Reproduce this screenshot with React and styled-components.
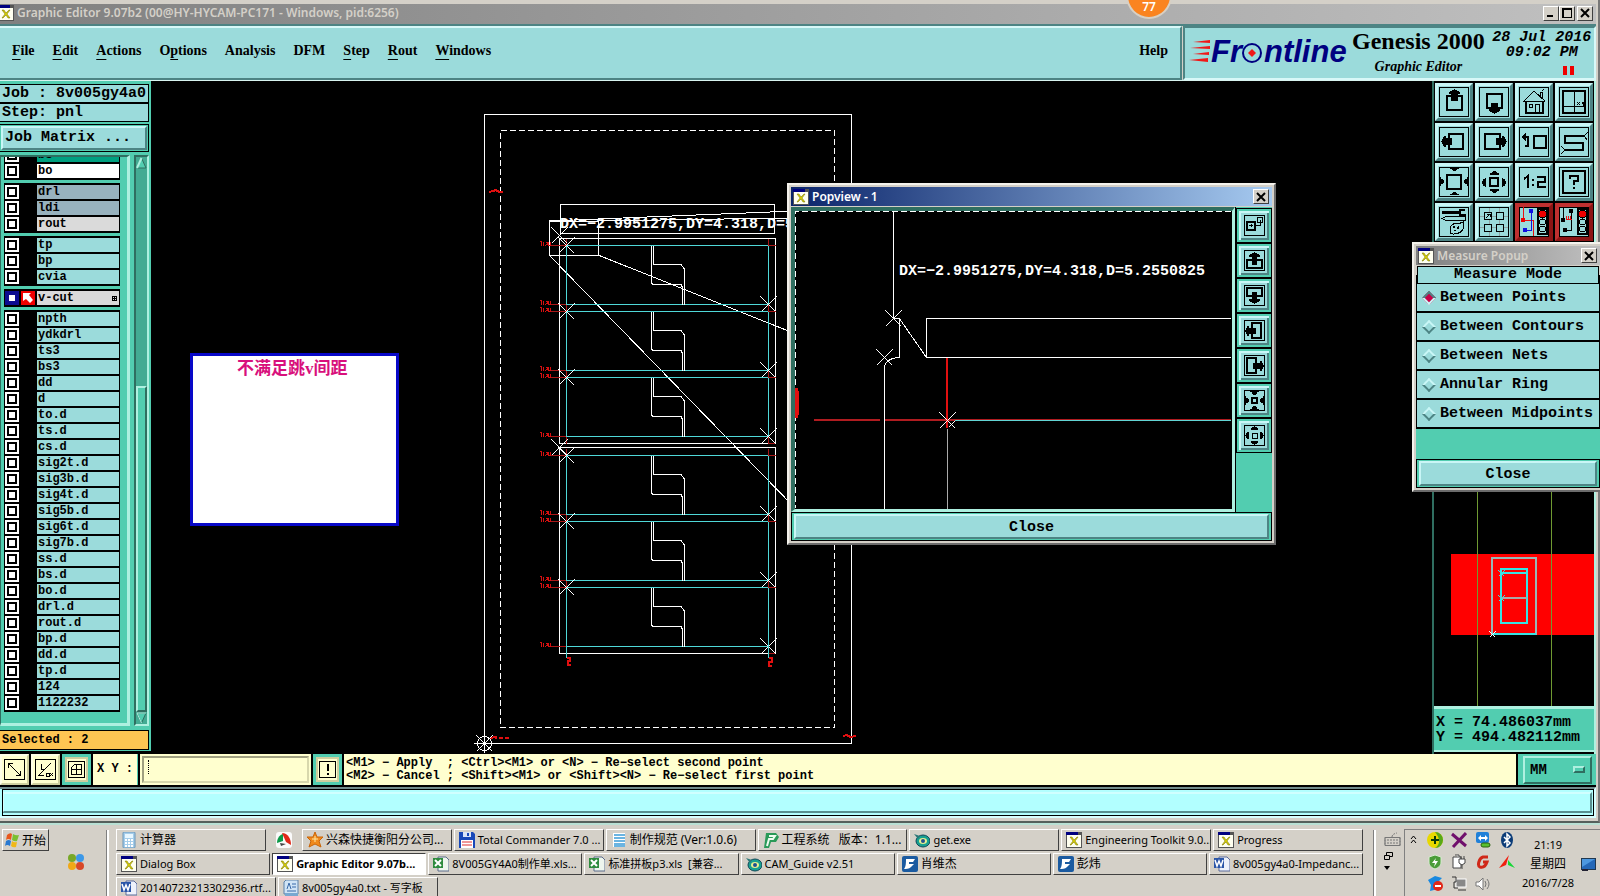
import React from "react";
import styled, { createGlobalStyle, css } from "styled-components";

const cyan = "#9bdbdb";
const cyanLight = "#c9f6f6";
const cyanDark = "#4d8484";
const green = "#52cdb0";
const greenLight = "#aef0e0";
const greenDark = "#2f6e60";
const greenMid = "#43ab93";
const cream = "#ffffcf";
const face = "#d4d0c8";

const mono = '"Liberation Mono", monospace';
const serif = '"Liberation Serif", serif';
const ui = '"Noto Sans", "Noto Sans CJK SC", sans-serif';

const raised = (width, light, dark) => css`
  border: ${width}px solid;
  border-color: ${light} ${dark} ${dark} ${light};
`;

const GlobalStyle = createGlobalStyle`
  * { box-sizing: border-box; }
  body {
    margin: 0;
    overflow: hidden;
    background: #000;
    color: #000;
    font-family: ${ui};
    font-size: 12px;
  }
  button, input, select {
    margin: 0;
    padding: 0;
    border-radius: 0;
    color: inherit;
    font: inherit;
  }
  svg { display: block; flex: none; }
`;

const tools = [
  { name: "Pan up", icon: "up" },
  { name: "Pan down", icon: "down" },
  { name: "Home", icon: "home" },
  { name: "Position", icon: "xy" },
  { name: "Pan left", icon: "left" },
  { name: "Pan right", icon: "right" },
  { name: "Previous view", icon: "prev" },
  { name: "Serpentine", icon: "snake" },
  { name: "Zoom in", icon: "zoomIn" },
  { name: "Zoom out", icon: "zoomOut" },
  { name: "Scale", icon: "scale" },
  { name: "Help", icon: "help" },
  { name: "Setup", icon: "setup" },
  { name: "Panelize", icon: "grid" },
  { name: "Net lights", icon: "netColor", alert: true },
  { name: "Short lights", icon: "netDark", alert: true },
];

const toolIcons = {
  up: (
    <>
      <rect x="8" y="9" width="15" height="14" fill="none" stroke="#000" strokeWidth="2" />
      <path d="M15 2h1v1h2v1h2v1h1v2h-2v7h-7V7h-2V5h1V4h2V3h2z" />
    </>
  ),
  down: (
    <>
      <rect x="8" y="7" width="15" height="14" fill="none" stroke="#000" strokeWidth="2" />
      <path d="M12 16h7v6h2v2h-1v1h-2v1h-2v1h-1v-1h-2v-1h-2v-1h-1v-2h2z" />
    </>
  ),
  left: (
    <>
      <rect x="10" y="7" width="14" height="15" fill="none" stroke="#000" strokeWidth="2" />
      <path d="M2 14h1v-2h1v-2h1V9h2v2h6v7H7v2H5v-1H4v-2H3v-2H2z" />
    </>
  ),
  right: (
    <>
      <rect x="6" y="7" width="15" height="15" fill="none" stroke="#000" strokeWidth="2" />
      <path d="M28 14h-1v-2h-1v-2h-1V9h-2v2h-6v7h6v2h2v-1h1v-2h1v-2h1z" />
    </>
  ),
  home: (
    <>
      <path d="M7 14v12h17V14" fill="none" stroke="#000" strokeWidth="2" />
      <path d="M4 14h22M5 14L15 4l11 10M21 9V5h2v6M23 4l2-2" fill="none" stroke="#000" />
      <path d="M10.500 17.500h3v3h-3zM16.500 26v-8.500h4V26" fill="none" stroke="#000" />
    </>
  ),
  xy: (
    <>
      <rect x="4" y="4" width="22" height="22" fill="none" stroke="#000" strokeWidth="2" />
      <path d="M15.500 4v22M4 19.500h22" fill="none" stroke="#000" />
      <path d="M18 15l3 3M21 15l-3 3M23 15l1 2 1-2M24 17v2" fill="none" stroke="#000" />
    </>
  ),
  prev: (
    <>
      <rect x="15" y="9" width="12" height="12" fill="none" stroke="#000" strokeWidth="2" />
      <path d="M5 10h4v9H6" fill="none" stroke="#000" strokeWidth="2" />
      <path d="M2 10l5-4v8z" />
    </>
  ),
  snake: (
    <>
      <path d="M26 9H6v7h18v7H5" fill="none" stroke="#000" strokeWidth="2" />
      <path d="M26 8l3-3M26 10l2 3M5 22l-3-3M5 24l-3 3" fill="none" stroke="#000" />
    </>
  ),
  zoomIn: (
    <>
      <rect x="8" y="8" width="14" height="14" fill="none" stroke="#000" strokeWidth="2" />
      <path d="M11 1h9v1h-2v1h-1v1h-3V3h-1V2h-2zM11 28h9v-1h-2v-1h-1v-1h-3v1h-1v1h-2zM1 10h1v2h2v1h1v3H4v1H2v2H1zM29 10h-1v2h-2v1h-1v3h1v1h2v2h1z" />
    </>
  ),
  zoomOut: (
    <>
      <rect x="11" y="11" width="8" height="8" fill="none" stroke="#000" strokeWidth="2" />
      <path d="M14 4h3v1h1v1h2v2h-9V6h2V5h1zM14 26h3v-1h1v-1h2v-2h-9v2h2v1h1zM3 14h1v-2h2v-1h1v9H6v-1H4v-2H3zM27 14h-1v-2h-2v-1h-1v9h1v-1h2v-2h1z" />
    </>
  ),
  scale: (
    <path
      d="M5 12l4-3v12M13 13h2M13 18h2M18 10h8v5h-7v5h8"
      fill="none"
      stroke="#000"
      strokeWidth="2"
    />
  ),
  help: (
    <>
      <rect x="4" y="4" width="22" height="22" fill="none" stroke="#000" strokeWidth="2" />
      <path d="M11 12V9h8v5h-4v4M15 20v2" fill="none" stroke="#000" strokeWidth="2" />
    </>
  ),
  setup: (
    <>
      <path d="M3 4h17v3H3zM20 2h6v2h-4v3h5v2h-7z" />
      <path d="M3 11.500l4-2h19v4H7zM11 22c0-5 5-6 8-5l5-2v7c-2 5-11 6-13 4z" fill="none" stroke="#000" />
      <path d="M14 19h2v2h-2zM19 19h1v3h-2zM15 23h2v1h-2z" />
    </>
  ),
  grid: (
    <>
      <path d="M1 9h28M1 20h28M10 1v28M20 1v28" stroke="#8da5a5" />
      <path
        d="M5.500 5.500h7v7h-7zM17.500 5.500h7v7h-7zM5.500 17.500h7v7h-7zM17.500 17.500h7v7h-7z"
        fill={cyan}
        stroke="#000"
      />
      <path d="M7 11l4-4M8 7h3v3" fill="none" stroke="#000" />
    </>
  ),
  netColor: (
    <>
      <path d="M4.500 0v13h10v16" fill="none" stroke="#e81010" />
      <path d="M12.500 4v19H7" fill="none" stroke="#1010e0" />
      <circle cx="12" cy="4" r="2.500" fill="#1010e0" />
      <circle cx="4" cy="13" r="2.500" fill="#f00000" />
      <circle cx="6" cy="23" r="2.500" fill="#1010e0" />
      <TrafficLight />
    </>
  ),
  netDark: (
    <>
      <path d="M4.500 0v13M12.500 4v19H7" fill="none" stroke="#000" />
      <path d="M7.500 9v3M9.500 9v3M11.500 9v3M7 12.500h6" fill="none" stroke="#e81010" />
      <circle cx="12" cy="4" r="2.500" />
      <circle cx="4" cy="13" r="2.500" />
      <circle cx="6" cy="23" r="2.500" />
      <TrafficLight />
    </>
  ),
};

const popTools = [
  { name: "Move view", icon: "move" },
  { name: "Pan up", icon: "up" },
  { name: "Pan down", icon: "down" },
  { name: "Pan left", icon: "left" },
  { name: "Pan right", icon: "right" },
  { name: "Zoom in", icon: "zoomIn" },
  { name: "Zoom out", icon: "zoomOut" },
];

const popIcons = {
  move: (
    <>
      <rect x="3" y="7" width="8" height="8" fill="none" stroke="#000" strokeWidth="2" />
      <path d="M13.500 2.500h5v5h-5zM11 10.500h5V5M5 10.500h4M7 9v3" fill="none" stroke="#000" />
    </>
  ),
  up: (
    <>
      <rect x="3" y="10" width="15" height="8" fill="none" stroke="#000" strokeWidth="2" />
      <path d="M10 2h1v1h2v1h2v1h1v2h-3v8H8V7H5V5h1V4h2V3h2z" />
    </>
  ),
  down: (
    <>
      <rect x="3" y="3" width="15" height="8" fill="none" stroke="#000" strokeWidth="2" />
      <path d="M10 19h1v-1h2v-1h2v-1h1v-2h-3V7H8v7H5v2h1v1h2v1h2z" />
    </>
  ),
  left: (
    <>
      <rect x="8" y="3" width="9" height="15" fill="none" stroke="#000" strokeWidth="2" />
      <path d="M1 10h1V8h1V6h2v2h7v6H5v2H3v-2H2v-2H1z" />
    </>
  ),
  right: (
    <>
      <rect x="3" y="3" width="9" height="15" fill="none" stroke="#000" strokeWidth="2" />
      <path d="M20 10h-1V8h-1V6h-2v2H9v6h7v2h2v-2h1v-2h1z" />
    </>
  ),
  zoomIn: (
    <>
      <rect x="8" y="8" width="5" height="5" fill="none" stroke="#000" strokeWidth="2" />
      <path d="M6 1h9v1h-2v2h-1v1H9V4H8V2H6zM6 20h9v-1h-2v-2h-1v-1H9v1H8v2H6zM1 6h1v2h2v1h1v3H4v1H2v2H1zM20 6h-1v2h-2v1h-1v3h1v1h2v2h1z" />
    </>
  ),
  zoomOut: (
    <>
      <rect x="8" y="8" width="5" height="5" fill="none" stroke="#000" />
      <path d="M10 1h1v1h2v1h1v2H7V3h1V2h2zM10 20h1v-1h2v-1h1v-2H7v2h1v1h2zM1 10h1V8h1V7h2v7H3v-1H2v-2H1zM20 10h-1V8h-1V7h-2v7h2v-1h1v-2h1z" />
    </>
  ),
};

const layerGroups = [
  [{ name: "bs", color: "#00a080" }, { name: "bo", color: "#ffffff" }],
  [
    { name: "drl", color: "#98b2be" },
    { name: "ldi", color: "#98b2be" },
    { name: "rout", color: "#dadada" },
  ],
  [{ name: "tp" }, { name: "bp" }, { name: "cvia" }],
  [{ name: "v-cut", color: "#dadada", active: true }],
  [
    "npth", "ydkdrl", "ts3", "bs3", "dd", "d", "to.d", "ts.d", "cs.d",
    "sig2t.d", "sig3b.d", "sig4t.d", "sig5b.d", "sig6t.d", "sig7b.d",
    "ss.d", "bs.d", "bo.d", "drl.d", "rout.d", "bp.d", "dd.d", "tp.d",
    "124", "1122232",
  ].map((name) => ({ name })),
];

const menus = [
  ["", "F", "ile"],
  ["", "E", "dit"],
  ["", "A", "ctions"],
  ["O", "p", "tions"],
  ["Analysis", "", ""],
  ["DFM", "", ""],
  ["", "S", "tep"],
  ["", "R", "out"],
  ["", "W", "indows"],
];

const measureModes = [
  "Between Points",
  "Between Contours",
  "Between Nets",
  "Annular Ring",
  "Between Midpoints",
];

const taskRows = [
  [
    { icon: "calc", text: "计算器", large: true },
    { loose: true, icon: "pinwheel" },
    { icon: "star", text: "兴森快捷衡阳分公司...", large: true },
    { icon: "disk", text: "Total Commander 7.0 ..." },
    { icon: "note", text: "制作规范 (Ver:1.0.6)", large: true },
    { icon: "p", text: "工程系统   版本：1.1...", large: true },
    { icon: "eye", text: "get.exe" },
    { icon: "x", text: "Engineering Toolkit 9.0..." },
    { icon: "x", text: "Progress" },
  ],
  [
    { icon: "x", text: "Dialog Box" },
    { icon: "x", text: "Graphic Editor 9.07b...", active: true },
    { icon: "excel", text: "8V005GY4A0制作单.xls..." },
    { icon: "excel", text: "标准拼板p3.xls  [兼容..." },
    { icon: "eye", text: "CAM_Guide v2.51" },
    { icon: "f", text: "肖维杰", large: true },
    { icon: "f", text: "彭炜", large: true },
    { icon: "word", text: "8v005gy4a0-Impedanc..." },
  ],
  [
    { icon: "word", text: "20140723213302936.rtf...", fixed: true },
    { icon: "pad", text: "8v005gy4a0.txt - 写字板", fixed: true },
  ],
];

function TrafficLight() {
  return (
    <>
      <rect x="19" y="2" width="9" height="25" fill={cyan} stroke="#000" strokeWidth="2" />
      <circle cx="23.500" cy="7" r="4" fill="#f00000" stroke="#000" />
      <circle cx="23.500" cy="15" r="3" fill="none" stroke="#000" />
      <circle cx="23.500" cy="22" r="3" fill="none" stroke="#000" />
    </>
  );
}

function XIcon() {
  return (
    <svg width="16" height="16" viewBox="0 0 16 16" aria-hidden="true">
      <rect width="16" height="16" fill="#555" />
      <rect x="0" y="0" width="12" height="3" fill="#000080" />
      <rect x="1" y="3" width="14" height="12" fill="#fffff0" />
      <path d="M4 5h2l2 3 3-3h1L9 9l3 4h-2l-2-3-3 3H4l3-4z" fill="#d8d000" stroke="#6f6b00" strokeWidth="0.500" />
    </svg>
  );
}

const taskIcons = {
  calc: (
    <>
      <rect x="2" y="0" width="12" height="16" rx="1" fill="#a5cdea" stroke="#6b96b8" />
      <rect x="4" y="2" width="8" height="4" fill="#e8f7ff" />
      <path d="M4 8h8M4 11h8M4 14h8" stroke="#fff" strokeWidth="2" strokeDasharray="2 1" />
    </>
  ),
  pinwheel: (
    <>
      <rect width="16" height="16" rx="3" fill="#fafafa" />
      <path d="M7 2c-4 1-6 5-6 9l6-2z" fill="#0c9a48" />
      <path d="M6 1c6 0 9 6 9 12l-5-3z" fill="#e02818" />
      <path d="M4 11l6 1-5 2z" fill="#444" />
    </>
  ),
  star: (
    <>
      <path d="M8 0l2 5 6 0-4 4 2 6-6-3-6 3 2-6-4-4h6z" fill="#f08a1c" stroke="#c96508" />
      <path d="M8 4v6M5 7h6" stroke="#ffe7a0" />
    </>
  ),
  disk: (
    <>
      <path d="M0 0h14l2 2v14H0z" fill="#1848b8" />
      <rect x="4" y="0" width="8" height="5" fill="#d8e4f8" />
      <rect x="8" y="1" width="2" height="3" fill="#1848b8" />
      <rect x="2" y="8" width="12" height="8" fill="#fff" />
      <path d="M3 10h10M3 13h10" stroke="#e03030" />
    </>
  ),
  note: (
    <>
      <rect x="2" y="1" width="12" height="14" fill="#fff" />
      <path d="M3 3h11M3 6h11M3 9h11M3 12h11M3 14h11" stroke="#3a9cd8" strokeWidth="1.500" />
    </>
  ),
  p: (
    <>
      <path d="M3 1h10l3 4-3 5H8l-2 6H1z" fill="#2a9a58" />
      <path d="M6 4h6l-2 3H6l-2 7" fill="none" stroke="#eefcf0" strokeWidth="2" />
    </>
  ),
  eye: (
    <>
      <ellipse cx="9" cy="9" rx="7" ry="6" fill="#18a090" stroke="#104858" />
      <ellipse cx="9" cy="9" rx="4" ry="3" fill="#e8f090" />
      <circle cx="9" cy="9" r="2" fill="#205090" />
      <path d="M0 2l6 2-2 3z" fill="#2a7878" />
    </>
  ),
  excel: (
    <>
      <path d="M5 1h8l3 3v11H5z" fill="#eef6ee" stroke="#5b6a8a" />
      <rect x="0" y="2" width="10" height="10" fill="#2e8b3e" />
      <path d="M2 4l6 6M8 4l-6 6" stroke="#fff" strokeWidth="2" />
    </>
  ),
  word: (
    <>
      <path d="M5 1h8l3 3v11H5z" fill="#eef2fb" stroke="#5b6a9a" />
      <rect x="0" y="2" width="10" height="10" fill="#2b56a8" />
      <path d="M1 4l2 6 2-5 2 5 2-6" fill="none" stroke="#fff" strokeWidth="1.500" />
    </>
  ),
  f: (
    <>
      <rect width="16" height="16" rx="2" fill="#1a5aa0" />
      <path d="M4 3h9l-2 3H7v2h5l-3 3c-2 2-5 2-7 2 2-2 2-7 2-10z" fill="#fff" />
    </>
  ),
  pad: (
    <>
      <path d="M3 0h12v14H1V2z" fill="#cfe4f6" stroke="#5a80a8" />
      <path d="M4 9l2-6 2 6M9 4h4M9 7h4M4 11h9" fill="none" stroke="#3668a8" />
      <rect x="2" y="13" width="13" height="3" fill="#78a8d0" />
    </>
  ),
};

function TaskIcon({ name }) {
  if (name === "x") return <XIcon />;
  return (
    <svg width="16" height="16" viewBox="0 0 16 16" aria-hidden="true">
      {taskIcons[name]}
    </svg>
  );
}

const cells = [245.5, 311.5, 377.5, 455.5, 521.5, 587.5];

const cross = (x, y, r = 8) =>
  `M${x - r} ${y - r}l${r * 2} ${r * 2}M${x + r} ${y - r}l${-r * 2} ${r * 2}`;

// dimension labels are too small to read at this zoom, so they are only hinted
const label = (x, y) =>
  `M${x} ${y - 2}h2v4M${x + 3.5} ${y - 2}v4M${x + 5} ${y + 2}h1M${x + 6} ${y - 1}h2v2h-2M${x + 9} ${y - 2}v4h2v-4`;

function BoardDrawing() {
  return (
    <svg width="1281" height="673" viewBox="151 81 1281 673" fill="none" shapeRendering="crispEdges" aria-label="Panel drawing">
      <g stroke="#fff">
        <rect x="484.500" y="114.500" width="367" height="629" />
        <rect x="500.500" y="130.500" width="334" height="597" strokeDasharray="6 3" />
        <rect x="560.500" y="204.500" width="214" height="29" />
        <rect x="559.500" y="238.500" width="216" height="205" />
        <rect x="559.500" y="447.500" width="216" height="206" />
        <rect x="549.500" y="221.500" width="49" height="34" />
        <path d="M549 221L795 211M598 221L1232 211M549 255L795 508M598 255L1232 508" />
      </g>
      {cells.map((y) => (
        <g key={y}>
          <path d={`M566 ${y}H769M566 ${y + 59}H769M566.500 ${y}v59M768.500 ${y}v59`} stroke="#4fd8d8" />
          <path d={`M551 ${y}h15M551 ${y + 59}h15M566.500 ${y - 7}v7M769 ${y}h7M768.500 ${y - 7}v7M566.500 ${y + 59}v7M768.500 ${y + 59}v7h7`} stroke="#a81818" />
          <path d={label(539.5, y - 2)} stroke="#d81010" />
          <path d={label(539.5, y + 57)} stroke="#d81010" />
          <path
            d={`M653.500 ${y}v19H681l3 4v36M651.500 ${y}v38l2 1H681l1 2v18`}
            stroke="#fff"
          />
          <path d={cross(566.5, y)} stroke="#fff" />
          <path d={cross(768.5, y + 59)} stroke="#fff" />
        </g>
      ))}
      <path d={cross(559.5, 235.5)} stroke="#fff" />
      <path d={cross(559.5, 447.5)} stroke="#fff" />
      <path d="M566.500 640v18M768.500 640v18" stroke="#4fd8d8" />
      <path
        d="M567 658h3v3h-2v4h3M769 658h3v4h-3v4h3M489 192l4-1 3-1 3 2h4M490 738l6-1v2M499 738h4M505 738h4M843 736l4-1 3 2 6-1"
        stroke="#e01010"
        strokeWidth="2"
      />
      <g stroke="#fff">
        <circle cx="484.500" cy="743.500" r="7" />
        <path d={cross(484.5, 743.5)} />
        <path d="M474 743.500h21M484.500 734v19" />
      </g>
      <CanvasText x="560" y="228">DX=−2.9951275,DY=4.318,D=5.2550825</CanvasText>
      <rect x="191" y="354" width="206" height="170" fill="#fff" stroke="#0808c8" strokeWidth="3" />
      <NoteText x="237" y="374">不满足跳v间距</NoteText>
    </svg>
  );
}

function PopviewDrawing() {
  return (
    <svg width="437" height="298" viewBox="795 211 437 298" fill="none" shapeRendering="crispEdges" aria-label="Magnified drawing">
      <path d="M1231 211.500H795.500V508" stroke="#fff" strokeDasharray="6 3" />
      <path d="M795 388h3l1 6v18l-1 6h-3z" fill="#e01010" />
      <path d="M814 420h66M884 420h347" stroke="#b01c20" strokeWidth="2" />
      <path d="M955 420.500h276" stroke="#62d4d4" />
      <path d="M947 357v71" stroke="#e01010" strokeWidth="2" />
      <path d="M947.500 429v80" stroke="#aaa" />
      <g stroke="#fff">
        <path d="M893.500 211v107.500h6v39c-8 0-15 4-15 10V509" />
        <path d="M899 318L926.500 357.500V318.500H1231M926 357.500H1231" />
        <path d={cross(893.5, 318.5)} />
        <path d={cross(884.5, 357.5)} />
        <path d={cross(947.5, 420.5)} />
        <path d={cross(951.5, 424.5, 3)} />
      </g>
      <CanvasText x="899" y="275">DX=−2.9951275,DY=4.318,D=5.2550825</CanvasText>
    </svg>
  );
}

function MiniMap() {
  return (
    <svg width="160" height="214" viewBox="1434 492 160 214" fill="none" shapeRendering="crispEdges" aria-label="Overview">
      <rect x="1451" y="554" width="143" height="81" fill="#ff0000" />
      <path d="M1477.500 492v214M1551.500 492v214" stroke="#6f9a32" />
      <rect x="1492" y="558" width="44" height="76" stroke="#98b8b8" strokeWidth="2" />
      <rect x="1501" y="569" width="26" height="54" stroke="#38e4e4" strokeWidth="2" />
      <path d="M1501 573h26M1492 634h44" stroke="#38e4e4" strokeWidth="2" />
      <path d="M1501 598h26" stroke="#a8a8a8" strokeWidth="2" />
      <path d={cross(1501.5, 573.5, 3) + cross(1501.5, 598.5, 3)} stroke="#38e4e4" />
      <path d={cross(1492.5, 634.5, 3)} stroke="#fff" />
    </svg>
  );
}

function Logo() {
  return (
    <svg width="164" height="44" viewBox="0 0 164 44" aria-label="Frontline">
      <g fill="#f01818">
        <path d="M5 10l17-2v3zM2 16l20-2v3zM5 22l16-2v3zM1 28l19-2v4z" />
      </g>
      <LogoText x="23" y="30">Fr</LogoText>
      <circle cx="64" cy="21" r="9" fill="none" stroke="#000080" strokeWidth="2" />
      <path d="M64 17l4 4-4 4-4-4z" fill="#f01818" />
      <LogoText x="76" y="30">ntline</LogoText>
    </svg>
  );
}

function TitleButton({ label, children }) {
  return (
    <CaptionButton aria-label={label}>
      <svg width="10" height="10" viewBox="0 0 10 10" fill="none" stroke="#000" strokeWidth="2" shapeRendering="crispEdges">
        {children}
      </svg>
    </CaptionButton>
  );
}

const closeGlyph = <path d="M1 1l8 8M9 1L1 9" shapeRendering="auto" />;

function LayerRow({ layer }) {
  return (
    <LayerLabel>
      <LayerCheck type="checkbox" $active={layer.active} aria-label={layer.name} />
      <LayerFlag>
        {layer.active && (
          <svg width="14" height="14" viewBox="0 0 14 14">
            <rect width="14" height="14" fill="#f00000" />
            <path d="M2 2h8L8 4l4 5-3 3-4-4-3 2z" fill="#fff" />
          </svg>
        )}
      </LayerFlag>
      <LayerName $color={layer.color}>
        {layer.name}
        {layer.active && (
          <svg width="5" height="5" viewBox="0 0 5 5" shapeRendering="crispEdges">
            <path d="M0.500 0.500h4v4h-4zM2.500 0v5M0 2.500h5" fill="none" stroke="#000" />
          </svg>
        )}
      </LayerName>
    </LayerLabel>
  );
}

function LayerPanel() {
  return (
    <SidePanel>
      <InfoRow>Job : 8v005gy4a0</InfoRow>
      <InfoRow>Step: pnl</InfoRow>
      <MatrixSlot>
        <MatrixButton>Job Matrix ...</MatrixButton>
      </MatrixSlot>
      <LayerArea>
        <LayerList>
          {layerGroups.map((group, i) => (
            <LayerGroup key={i}>
              {group.map((layer) => (
                <LayerRow key={layer.name} layer={layer} />
              ))}
            </LayerGroup>
          ))}
        </LayerList>
        <ScrollBar>
          <ScrollArrow aria-label="Scroll up">
            <svg width="11" height="12" viewBox="0 0 11 12">
              <path d="M5.500 1L10 11H1z" fill={green} stroke={greenDark} />
              <path d="M5.500 1L1 11" stroke={greenLight} strokeWidth="2" />
            </svg>
          </ScrollArrow>
          <ScrollTrack>
            <ScrollThumb />
          </ScrollTrack>
          <ScrollArrow aria-label="Scroll down">
            <svg width="11" height="12" viewBox="0 0 11 12">
              <path d="M5.500 11L10 1H1z" fill={green} stroke={greenDark} />
              <path d="M5.500 11L1 1h9" fill="none" stroke={greenLight} />
            </svg>
          </ScrollArrow>
        </ScrollBar>
      </LayerArea>
      <SelectedRow>Selected : 2</SelectedRow>
    </SidePanel>
  );
}

function Popview() {
  return (
    <PopviewWindow>
      <PopupTitle $from="#0a246a" $to="#a6caf0" $color="#fff">
        <XIcon />
        <TitleText>Popview - 1</TitleText>
        <TitleButton label="Close">{closeGlyph}</TitleButton>
      </PopupTitle>
      <PopviewBody>
        <PopviewCanvas>
          <PopviewDrawing />
        </PopviewCanvas>
        <PopviewTools>
          {popTools.map((tool) => (
            <PopToolButton key={tool.name} aria-label={tool.name}>
              <svg width="21" height="21" viewBox="0 0 21 21" shapeRendering="crispEdges">
                <rect x="0.500" y="0.500" width="20" height="20" fill={cyan} stroke="#000" />
                {popIcons[tool.icon]}
              </svg>
            </PopToolButton>
          ))}
        </PopviewTools>
      </PopviewBody>
      <CloseSlot>
        <CloseButton>Close</CloseButton>
      </CloseSlot>
    </PopviewWindow>
  );
}

function MeasurePopup() {
  return (
    <MeasureWindow>
      <PopupTitle $from="#808080" $to="#c0c0c0" $color={face}>
        <XIcon />
        <TitleText>Measure Popup</TitleText>
        <TitleButton label="Close">{closeGlyph}</TitleButton>
      </PopupTitle>
      <MeasureBody>
        <legend>Measure Mode</legend>
        {measureModes.map((mode, i) => (
          <ModeRow key={mode}>
            <ModeRadio type="radio" name="mode" defaultChecked={i === 0} />
            {mode}
          </ModeRow>
        ))}
      </MeasureBody>
      <MeasureSpacer />
      <CloseSlot>
        <CloseButton>Close</CloseButton>
      </CloseSlot>
    </MeasureWindow>
  );
}

function CommandBar() {
  return (
    <CommandRow>
      <SnapButton aria-label="Snap diagonal">
        <svg width="21" height="21" viewBox="0 0 21 21" fill="none" stroke="#000" shapeRendering="crispEdges">
          <path d="M0.500 0.500h20v20h-20zM5 5l11 11M4.500 9V4.500H9M12 16.500h4.500V12" />
        </svg>
      </SnapButton>
      <SnapButton aria-label="Snap angle">
        <svg width="21" height="21" viewBox="0 0 21 21" fill="none" stroke="#000" shapeRendering="crispEdges">
          <path d="M0.500 0.500h20v20h-20zM3 17L16 4M3 16.500h6M6.500 5v5h3M11 14h3v3h-3zM15 14l3 3M18 14l-3 3" />
        </svg>
      </SnapButton>
      <SnapButton $on aria-label="Snap grid">
        <svg width="17" height="17" viewBox="0 0 17 17" fill="none" stroke="#000" shapeRendering="crispEdges">
          <path d="M0.500 0.500h16v16h-16zM3.500 13.500v-7l3-3h7v10zM8.500 3v11M3 8.500h11" />
        </svg>
      </SnapButton>
      <CoordLabel htmlFor="xy">X Y :</CoordLabel>
      <CoordField>
        <CoordInput id="xy" />
        <Caret />
      </CoordField>
      <SnapButton $on aria-label="Run">
        <svg width="17" height="17" viewBox="0 0 17 17" fill="none" stroke="#000" shapeRendering="crispEdges">
          <path d="M0.500 0.500h16v16h-16z" />
          <path d="M8.500 3v7M8.500 12v2" strokeWidth="2" />
        </svg>
      </SnapButton>
      <Hint>
        {"<M1> − Apply  ; <Ctrl><M1> or <N> − Re−select second point\n<M2> − Cancel ; <Shift><M1> or <Shift><N> − Re−select first point"}
      </Hint>
      <UnitSlot>
        <UnitSelect aria-label="Units" defaultValue="MM">
          <option>MM</option>
          <option>INCH</option>
        </UnitSelect>
        <UnitMark />
      </UnitSlot>
    </CommandRow>
  );
}

const trayIcons = [
  <>
    <circle cx="8" cy="8" r="8" fill="#e8d800" />
    <path d="M8 0a8 8 0 0 1 0 16c6-4 5-10 0-16z" fill="#58a818" />
    <path d="M8 4v8M4 8h8" stroke="#083808" strokeWidth="2" />
  </>,
  <path key="x" d="M1 2l14 12M15 1L2 15" stroke="#70106c" strokeWidth="3" />,
  <>
    <rect x="1" y="0" width="13" height="11" rx="2" fill="#2080d8" />
    <path d="M3 6l3-3v2h4V3l3 3-3 3V7H6v2z" fill="#fff" />
    <rect x="6" y="11" width="9" height="4" rx="2" fill="#58c030" stroke="#286010" />
  </>,
  <>
    <ellipse cx="8" cy="8" rx="6" ry="8" fill="#0c3c78" />
    <path d="M5 5l6 6-3 3V2l3 3-6 6" fill="none" stroke="#fff" strokeWidth="1.500" />
  </>,
  <>
    <path d="M8 1l6 2v5c0 4-3 6-6 7-3-1-6-3-6-7V3z" fill="#4a9c38" stroke="#d8ecd0" />
    <path d="M9 4l-4 5h3l-1 4 4-6H8z" fill="#fff" />
  </>,
  <>
    <path d="M2 3h8v11H2z" fill="#fff" stroke="#444" />
    <path d="M4 1h4v2M8 5h6v4l-3 2-3-2zM10 2v3M13 2v3M11 11v4" fill="#fff" stroke="#444" />
  </>,
  <path key="g" d="M13 3H8C4 4 2 12 5 13c4 1 6-2 7-5H8" fill="none" stroke="#d02818" strokeWidth="3" />,
  <>
    <path d="M10 1L0 14l7-3z" fill="#f02010" />
    <path d="M9 6l7 8-7-3z" fill="#18d838" />
  </>,
  <>
    <path d="M1 4l7-4 7 2-4 4v7l-8 2 1-6z" fill="#1888e0" />
    <circle cx="11" cy="10" r="5" fill="#e02818" />
    <path d="M8 10h6" stroke="#fff" strokeWidth="2" />
  </>,
  <>
    <rect x="5" y="3" width="10" height="8" fill="#888" stroke="#fff" />
    <path d="M1 1h4v5H3v6h4M7 14h8" fill="none" stroke="#333" />
  </>,
  <>
    <path d="M1 6h3l4-4v12l-4-4H1z" fill="#fff" stroke="#777" />
    <path d="M10 5q2 3 0 6M12 3q4 5 0 10" fill="none" stroke="#777" />
  </>,
];

function Taskbar() {
  return (
    <TaskbarRoot>
      <StartArea>
        <StartButton>
          <svg width="16" height="16" viewBox="0 0 16 16">
            <path d="M2 3q3-3 5-1L6 8Q3 6 1 8z" fill="#e8581c" />
            <path d="M8 2q3 2 6 1l-2 6q-2 1-5-1z" fill="#7ac030" />
            <path d="M1 9q3-2 5 0l-1 5q-3-2-5 0z" fill="#2878d0" />
            <path d="M7 9q2 2 5 1l-1 5q-3 1-5-1z" fill="#f0b818" />
          </svg>
          开始
        </StartButton>
        <QuickLaunch aria-label="Launcher">
          <svg width="17" height="17" viewBox="0 0 17 17">
            <circle cx="4" cy="4" r="4" fill="#78a828" />
            <circle cx="12" cy="4" r="4" fill="#3c98e8" />
            <circle cx="4" cy="12" r="4" fill="#f0a818" />
            <circle cx="12" cy="12" r="4" fill="#d84828" />
          </svg>
        </QuickLaunch>
      </StartArea>
      <Grip />
      <TaskRows>
        {taskRows.map((row, i) => (
          <TaskRow key={i}>
            {row.map((task, j) =>
              task.loose ? (
                <LooseIcon key={j}>
                  <TaskIcon name={task.icon} />
                </LooseIcon>
              ) : (
                <TaskButton key={j} $active={task.active} $fixed={task.fixed} $large={task.large}>
                  <TaskIcon name={task.icon} />
                  <span>{task.text}</span>
                </TaskButton>
              )
            )}
          </TaskRow>
        ))}
      </TaskRows>
      <Grip />
      <LanguageBar>
        <svg width="17" height="14" viewBox="0 0 17 14" fill="none" stroke="#777">
          <path d="M1 5.500h15v8H1zM3 8h11M3 11h11M8 5q0-3 5-4" strokeDasharray="2 1" />
          <path d="M1 5.500h15v8H1z" />
        </svg>
        <svg width="9" height="8" viewBox="0 0 9 8" fill="none" stroke="#000">
          <path d="M0.500 3.500h5v4h-5zM2.500 3V0.500h6v4H6" />
        </svg>
        <svg width="6" height="4" viewBox="0 0 6 4">
          <path d="M0 0h6L3 4z" />
        </svg>
      </LanguageBar>
      <Tray>
        <svg width="7" height="9" viewBox="0 0 7 9" fill="none" stroke="#000">
          <path d="M1 4l2.500-3L6 4M1 8l2.500-3L6 8" />
        </svg>
        <TrayGrid>
          {trayIcons.map((icon, i) => (
            <svg key={i} width="16" height="16" viewBox="0 0 16 16">
              {icon}
            </svg>
          ))}
        </TrayGrid>
        <Clock>
          <span>21:19</span>
          <ClockDay>星期四</ClockDay>
          <span>2016/7/28</span>
        </Clock>
        <svg width="15" height="13" viewBox="0 0 15 13">
          <rect x="0.500" y="0.500" width="14" height="11" fill="#2468b8" stroke="#203850" />
          <path d="M1 1h13L1 9z" fill="#4c98e0" />
          <rect x="1" y="11" width="6" height="2" fill="#223" />
        </svg>
      </Tray>
    </TaskbarRoot>
  );
}

export default function App() {
  return (
    <Desktop>
      <GlobalStyle />
      <EditorWindow>
        <TitleBar>
          <XIcon />
          <TitleText>Graphic Editor 9.07b2 (00@HY-HYCAM-PC171 - Windows, pid:6256)</TitleText>
          <TitleButton label="Minimize">
            <path d="M1 8h6" />
          </TitleButton>
          <TitleButton label="Maximize">
            <path d="M0 1h10M0.500 0v10M9.500 0v10M0 9.500h10" />
          </TitleButton>
          <TitleButton label="Close">{closeGlyph}</TitleButton>
        </TitleBar>
        <Header>
          <MenuBar>
            {menus.map(([before, key, after]) => (
              <MenuItem href="#" key={before + key + after}>
                {before}
                {key && <u>{key}</u>}
                {after}
              </MenuItem>
            ))}
            <HelpItem href="#">Help</HelpItem>
          </MenuBar>
          <Brand>
            <Logo />
            <Product>
              <h1>Genesis 2000</h1>
              <p>Graphic Editor</p>
            </Product>
            <DateBox>
              <span>28 Jul 2016</span>
              <span>09:02 PM</span>
              <Paused />
            </DateBox>
          </Brand>
        </Header>
        <Workspace>
          <LayerPanel />
          <Board>
            <BoardDrawing />
          </Board>
          <RightPanel>
            <ToolGrid>
              {tools.map((tool) => (
                <ToolButton key={tool.name} aria-label={tool.name} $alert={tool.alert}>
                  <svg width="30" height="30" viewBox="0 0 30 30" shapeRendering="crispEdges">
                    <rect x="0.500" y="0.500" width="29" height="29" fill="none" stroke="#000" />
                    {toolIcons[tool.icon]}
                  </svg>
                </ToolButton>
              ))}
            </ToolGrid>
            <MapBox>
              <MiniMap />
            </MapBox>
            <Readout>
              <div>X = 74.486037mm</div>
              <div>Y = 494.482112mm</div>
            </Readout>
          </RightPanel>
        </Workspace>
        <CommandBar />
        <StatusStrip>
          <div />
        </StatusStrip>
      </EditorWindow>
      <Taskbar />
      <Popview />
      <MeasurePopup />
      <Badge>77</Badge>
    </Desktop>
  );
}

const Desktop = styled.div`
  position: relative;
  display: flex;
  flex-direction: column;
  height: 100vh;
  overflow: hidden;
`;

const EditorWindow = styled.main`
  display: flex;
  flex: 1;
  flex-direction: column;
  min-height: 0;
  padding-right: 2px;
  padding-bottom: 3px;
  border-right: 2px solid #777;
  border-bottom: 2px solid #55605c;
  background: ${face};
`;

const TitleBar = styled.header`
  display: flex;
  align-items: center;
  height: 26px;
  padding: 0 3px 2px 0;
  border-top: 4px solid ${face};
  border-bottom: 2px solid ${cyanDark};
  background: linear-gradient(90deg, #808080, #c0c0c0);
  color: ${face};

  & > svg {
    margin-left: -2px;
  }

  & > button:last-child {
    margin-left: 2px;
  }
`;

const TitleText = styled.span`
  flex: 1;
  margin-left: 3px;
  overflow: hidden;
  font-size: 12px;
  font-weight: 600;
  line-height: 16px;
  white-space: nowrap;
`;

const CaptionButton = styled.button`
  display: flex;
  align-items: center;
  justify-content: center;
  width: 16px;
  height: 15px;
  border: 1px solid;
  border-color: #fff #404040 #404040 #fff;
  background: ${face};
`;

const Header = styled.div`
  display: flex;
  height: 55px;
  border-bottom: 1px solid #d8f4f0;
`;

const MenuBar = styled.nav`
  display: flex;
  flex: 1;
  align-items: center;
  gap: 18px;
  padding: 0 12px 4px;
  ${raised(2, "#d8f8f8", cyanDark)}
  border-left: 0;
  background: ${cyan};
`;

const MenuItem = styled.a`
  color: #000;
  font-family: ${serif};
  font-size: 14px;
  font-weight: 700;
  text-decoration: none;

  u {
    text-underline-offset: 4px;
  }
`;

const HelpItem = styled(MenuItem)`
  margin-left: auto;
`;

const Brand = styled.div`
  display: flex;
  align-items: flex-start;
  width: 413px;
  margin-left: 1px;
  padding: 0 1px 0 3px;
  ${raised(2, cyanDark, "#d8f8f8")}
  background: ${cyan};

  & > svg {
    margin-top: 4px;
  }
`;

const Product = styled.div`
  display: flex;
  flex-direction: column;
  align-items: center;
  padding-top: 3px;
  font-family: ${serif};
  font-weight: 700;
  white-space: nowrap;

  h1 {
    margin: 0;
    font-size: 24px;
    font-weight: 700;
    line-height: 20px;
  }

  p {
    margin: 8px 0 0;
    font-size: 14px;
    font-style: italic;
    line-height: 16px;
  }
`;

const DateBox = styled.div`
  display: flex;
  flex: 1;
  flex-direction: column;
  align-items: center;
  padding: 2px 0 0 6px;
  font-family: ${mono};
  font-size: 15px;
  font-style: italic;
  font-weight: 700;
  line-height: 15px;
  white-space: nowrap;
`;

const Paused = styled.i`
  align-self: flex-end;
  width: 11px;
  height: 9px;
  margin: 6px 19px 0 0;
  border: solid #f00000;
  border-width: 0 4px;
`;

const Workspace = styled.div`
  display: flex;
  flex: 1;
  min-height: 0;
  background: #000;
`;

const Board = styled.section`
  flex: 1;
  min-width: 0;
  overflow: hidden;
`;

const CanvasText = styled.text`
  fill: #fff;
  font-family: ${mono};
  font-size: 15px;
  font-weight: 700;
`;

const NoteText = styled.text`
  fill: #d8107c;
  font-family: "Liberation Serif", "Noto Sans CJK SC", serif;
  font-size: 17px;
  font-weight: 700;
`;

const LogoText = styled.text`
  fill: #000080;
  font-family: "Liberation Sans", sans-serif;
  font-size: 31px;
  font-style: italic;
  font-weight: 700;
`;

const SidePanel = styled.aside`
  display: flex;
  flex-direction: column;
  width: 151px;
  margin-bottom: 3px;
  padding: 3px 2px 1px 0;
  background: ${green};
`;

const InfoRow = styled.div`
  height: 19px;
  padding-left: 2px;
  border: 1px solid #000;
  border-left: 0;
  background: ${cyan};
  font-family: ${mono};
  font-size: 15px;
  font-weight: 700;
  line-height: 17px;
  white-space: nowrap;
`;

const MatrixSlot = styled.div`
  display: flex;
  height: 28px;
  margin: 2px 0 3px;
  padding: 1px;
  border: 1px solid #000;
  border-left: 0;
`;

const MatrixButton = styled.button`
  flex: 1;
  padding-left: 2px;
  ${raised(2, cyanLight, cyanDark)}
  background: ${cyan};
  font-family: ${mono};
  font-size: 15px;
  font-weight: 700;
  line-height: 16px;
  text-align: left;
`;

const LayerArea = styled.div`
  display: flex;
  flex: 1;
  min-height: 0;
  margin-bottom: 4px;
`;

const LayerList = styled.div`
  display: flex;
  flex: 1;
  flex-direction: column;
  justify-content: flex-end;
  gap: 3px;
  min-width: 0;
  margin-right: 4px;
  padding: 0 7px 11px 3px;
  overflow: hidden;
  border: solid;
  border-width: 2px 3px 3px 1px;
  border-color: ${greenDark} ${greenLight} ${greenLight} ${greenDark};
  background: ${green};
`;

const LayerGroup = styled.div`
  flex: none;
  padding: 1px 0;
  background: #000;
`;

const LayerLabel = styled.label`
  display: flex;
  align-items: center;
  height: 16px;
  padding: 0 1px;
`;

const LayerCheck = styled.input`
  width: 14px;
  height: 14px;
  appearance: none;
  border: 2px solid #fff;
  outline: 2px solid #000;
  outline-offset: -4px;
  background: #fff;

  ${(p) =>
    p.$active &&
    css`
      border: 4px solid #0c0c90;
      outline: none;
    `}
`;

const LayerFlag = styled.span`
  display: flex;
  justify-content: center;
  width: 18px;
`;

const LayerName = styled.span`
  display: flex;
  flex: 1;
  align-items: center;
  justify-content: space-between;
  height: 14px;
  padding: 0 2px 0 1px;
  background: ${(p) => p.$color || cyan};
  font-family: ${mono};
  font-size: 12px;
  font-weight: 700;
  line-height: 14px;
`;

const ScrollBar = styled.div`
  display: flex;
  flex-direction: column;
  width: 15px;
  ${raised(2, greenDark, greenLight)}
  background: ${greenMid};
`;

const ScrollArrow = styled.button`
  height: 12px;
  border: 0;
  background: ${greenMid};
`;

const ScrollTrack = styled.div`
  display: flex;
  flex: 1;
  flex-direction: column;
  justify-content: flex-end;
`;

const ScrollThumb = styled.div`
  height: 60%;
  ${raised(2, greenLight, greenDark)}
  background: ${green};
`;

const SelectedRow = styled.div`
  height: 20px;
  padding-left: 2px;
  border: 1px solid #000;
  border-left: 0;
  background: #fdc553;
  font-family: ${mono};
  font-size: 12px;
  font-weight: 700;
  line-height: 18px;
`;

const RightPanel = styled.aside`
  display: flex;
  flex-direction: column;
  width: 164px;
  border-left: 2px solid ${greenDark};
  border-right: 2px solid ${greenLight};
`;

const ToolGrid = styled.div`
  display: grid;
  grid-template-columns: repeat(4, 40px);
  grid-auto-rows: 40px;
  padding-top: 1px;
`;

const ToolButton = styled.button`
  display: flex;
  align-items: center;
  justify-content: center;
  margin: 1px;
  ${(p) => (p.$alert ? raised(4, "#c03030", "#8c1414") : raised(3, cyanLight, cyanDark))}
  background: ${cyan};
`;

const MapBox = styled.div`
  display: flex;
  flex: 1;
  align-items: flex-end;
`;

const Readout = styled.div`
  height: 46px;
  margin-bottom: 2px;
  padding: 6px 2px 0;
  border: solid;
  border-width: 3px 0 2px;
  border-color: ${greenLight};
  background: ${green};
  font-family: ${mono};
  font-size: 15px;
  font-weight: 700;
  line-height: 15px;
  white-space: nowrap;
`;

const CommandRow = styled.div`
  display: flex;
  gap: 2px;
  height: 33px;
  border-bottom: 2px solid #000;
  background: #000;
`;

const SnapButton = styled.button`
  display: flex;
  align-items: center;
  justify-content: center;
  width: 29px;
  ${(p) => (p.$on ? `border: 3px solid ${green};` : raised(2, "#ffffe8", "#cfcfa0"))}
  outline: ${(p) => (p.$on ? "2px solid #cfcfa0" : "none")};
  outline-offset: -5px;
  background: ${cream};
`;

const CoordLabel = styled.label`
  width: 45px;
  border-right: 1px solid ${green};
  background: ${cream};
  font-family: ${mono};
  font-size: 12px;
  font-weight: 700;
  line-height: 31px;
  text-align: center;
  white-space: pre;
`;

const CoordField = styled.div`
  position: relative;
  display: flex;
  width: 171px;
  padding: 2px;
  background: ${cream};
`;

const CoordInput = styled.input`
  flex: 1;
  min-width: 0;
  ${raised(2, "#a0a080", "#d8d8ac")}
  background: ${cream};
`;

const Caret = styled.i`
  position: absolute;
  top: 6px;
  left: 8px;
  height: 14px;
  border-left: 1px dotted #000;
`;

const Hint = styled.div`
  flex: 1;
  padding: 3px 2px 0;
  overflow: hidden;
  background: ${cream};
  font-family: ${mono};
  font-size: 12px;
  font-weight: 700;
  line-height: 13px;
  white-space: pre;
`;

const UnitSlot = styled.div`
  position: relative;
  display: flex;
  width: 78px;
  padding: 2px 4px 1px 5px;
  background: ${green};
`;

const UnitSelect = styled.select`
  flex: 1;
  padding-left: 5px;
  appearance: none;
  ${raised(2, greenLight, greenDark)}
  background: ${green};
  font-family: ${mono};
  font-size: 14px;
  font-weight: 700;
`;

const UnitMark = styled.i`
  position: absolute;
  top: 12px;
  right: 11px;
  width: 12px;
  height: 7px;
  ${raised(2, greenLight, greenDark)}
  pointer-events: none;
`;

const StatusStrip = styled.footer`
  display: flex;
  height: 31px;
  padding: 3px 2px;
  border-top: 2px solid #728c8c;
  border-right: 2px solid #d8ffff;
  border-bottom: 2px solid #d8ffff;
  outline: 1px solid #000;
  outline-offset: -3px;
  background: #b2ffff;

  div {
    flex: 1;
    ${raised(2, "#d0ffff", "#589090")}
  }
`;

const PopupFrame = styled.section`
  position: absolute;
  display: flex;
  flex-direction: column;
  padding: 2px;
  border: 2px solid;
  border-color: #f4f2ec #6c6c6c #6c6c6c #f4f2ec;
  background: ${face};
`;

const PopviewWindow = styled(PopupFrame)`
  top: 183px;
  left: 787px;
  width: 489px;
`;

const MeasureWindow = styled(PopupFrame)`
  top: 242px;
  right: 0;
  width: 188px;
  padding-right: 0;
  border-right: 0;
`;

const PopupTitle = styled.div`
  display: flex;
  align-items: center;
  height: 19px;
  padding: 0 3px 0 2px;
  background: linear-gradient(90deg, ${(p) => p.$from}, ${(p) => p.$to});
  color: ${(p) => p.$color};
`;

const PopviewBody = styled.div`
  display: flex;
  gap: 1px;
  margin-top: 1px;
  background: #000;
`;

const PopviewCanvas = styled.div`
  flex: 1;
  min-width: 0;
  overflow: hidden;
  border: solid;
  border-width: 4px 3px 3px 4px;
  border-color: ${greenDark} ${greenLight} ${greenLight} ${greenDark};
`;

const PopviewTools = styled.div`
  width: 36px;
  padding-top: 1px;
  background: ${green};
`;

const PopToolButton = styled.button`
  display: flex;
  align-items: center;
  justify-content: center;
  width: 36px;
  height: 35px;
  border: 1px solid #000;
  background: ${cyan};
  box-shadow: inset 0 0 0 2px ${green}, inset 4px 4px 0 ${cyanLight}, inset -4px -4px 0 ${cyanDark};
`;

const CloseSlot = styled.div`
  display: flex;
  height: 29px;
  padding: 1px 2px;
  border: 1px solid #000;
  background: ${green};
`;

const CloseButton = styled.button`
  flex: 1;
  padding-top: 1px;
  ${raised(2, cyanLight, cyanDark)}
  background: ${cyan};
  font-family: ${mono};
  font-size: 15px;
  font-weight: 700;
`;

const MeasureBody = styled.fieldset`
  display: flex;
  flex-direction: column;
  gap: 2px;
  min-width: 0;
  margin: 1px 0 0;
  padding: 0 1px 2px;
  border: 0;
  background: #000;
  font-family: ${mono};
  font-size: 15px;
  font-weight: 700;

  legend {
    width: 100%;
    margin: 0;
    padding: 0;
    border: 1px solid #000;
    background: ${cyan};
    line-height: 16px;
    text-align: center;
  }
`;

const ModeRow = styled.label`
  display: flex;
  align-items: center;
  gap: 6px;
  height: 27px;
  padding-left: 7px;
  background: ${cyan};
  white-space: nowrap;
`;

const ModeRadio = styled.input`
  width: 10px;
  height: 10px;
  appearance: none;
  ${raised(2, cyanLight, cyanDark)}
  transform: rotate(45deg);

  &:checked {
    border-color: ${cyanDark} ${cyanLight} ${cyanLight} ${cyanDark};
    background: #c80048;
  }
`;

const MeasureSpacer = styled.div`
  height: 30px;
  background: ${green};
`;

const Badge = styled.div`
  position: absolute;
  top: -28px;
  left: 1126px;
  width: 46px;
  height: 47px;
  padding-top: 25px;
  border: 2px solid #d8d0c4;
  border-radius: 50%;
  background: #fa8420;
  color: #fff;
  font-size: 12px;
  font-weight: 600;
  line-height: 16px;
  text-align: center;
`;

const TaskbarRoot = styled.footer`
  display: flex;
  height: 73px;
  padding-top: 4px;
  border-top: 2px solid #b8e0d4;
  background: ${face};
`;

const StartArea = styled.div`
  display: flex;
  align-items: flex-start;
  width: 106px;
  padding-left: 2px;
`;

const StartButton = styled.button`
  display: flex;
  align-items: center;
  gap: 1px;
  height: 22px;
  padding: 0 2px;
  border: 1px solid;
  border-color: #fff #404040 #404040 #fff;
  background: ${face};
  white-space: nowrap;
`;

const QuickLaunch = styled.button`
  align-self: center;
  margin-left: 19px;
  border: 0;
  background: none;
`;

const Grip = styled.i`
  width: 3px;
  margin-top: 1px;
  border-left: 1px solid #808080;
  border-right: 2px solid #fff;
`;

const TaskRows = styled.div`
  display: flex;
  flex: 1;
  flex-direction: column;
  gap: 2px;
  min-width: 0;
  padding: 0 10px 0 7px;
`;

const TaskRow = styled.div`
  display: flex;
  flex: none;
  gap: 2px;
  height: 22px;
`;

const TaskButton = styled.button`
  display: flex;
  flex: ${(p) => (p.$fixed ? "0 0 160px" : "1 1 0")};
  align-items: center;
  gap: 3px;
  min-width: 0;
  padding: 0 4px;
  overflow: hidden;
  border: 1px solid;
  border-color: ${(p) => (p.$active ? "#404040 #fff #fff #404040" : "#fff #404040 #404040 #fff")};
  background: ${(p) => (p.$active ? "#fff" : face)};
  font-size: ${(p) => (p.$large ? 12 : 11)}px;
  font-weight: ${(p) => (p.$active ? 700 : 400)};
  line-height: 20px;
  white-space: pre;
`;

const LooseIcon = styled.span`
  display: flex;
  align-items: center;
  justify-content: center;
  width: 32px;
`;

const LanguageBar = styled.div`
  display: flex;
  flex-direction: column;
  align-items: flex-start;
  gap: 6px;
  width: 28px;
  padding: 3px 0 0 8px;
`;

const Tray = styled.div`
  display: flex;
  align-items: flex-start;
  width: 196px;
  padding: 2px 4px 0 5px;
  border-top: 1px solid #808080;
  border-left: 1px solid #808080;

  & > svg {
    align-self: flex-start;
    margin-top: 3px;
  }

  & > svg:last-child {
    margin-top: 26px;
  }
`;

const TrayGrid = styled.div`
  display: grid;
  grid-template-columns: repeat(4, 16px);
  gap: 6px 8px;
  margin-left: 10px;
`;

const Clock = styled.div`
  display: flex;
  flex: 1;
  flex-direction: column;
  align-items: center;
  padding-top: 3px;
  font-size: 11px;
  line-height: 19px;
`;

const ClockDay = styled.span`
  font-size: 12px;
`;
